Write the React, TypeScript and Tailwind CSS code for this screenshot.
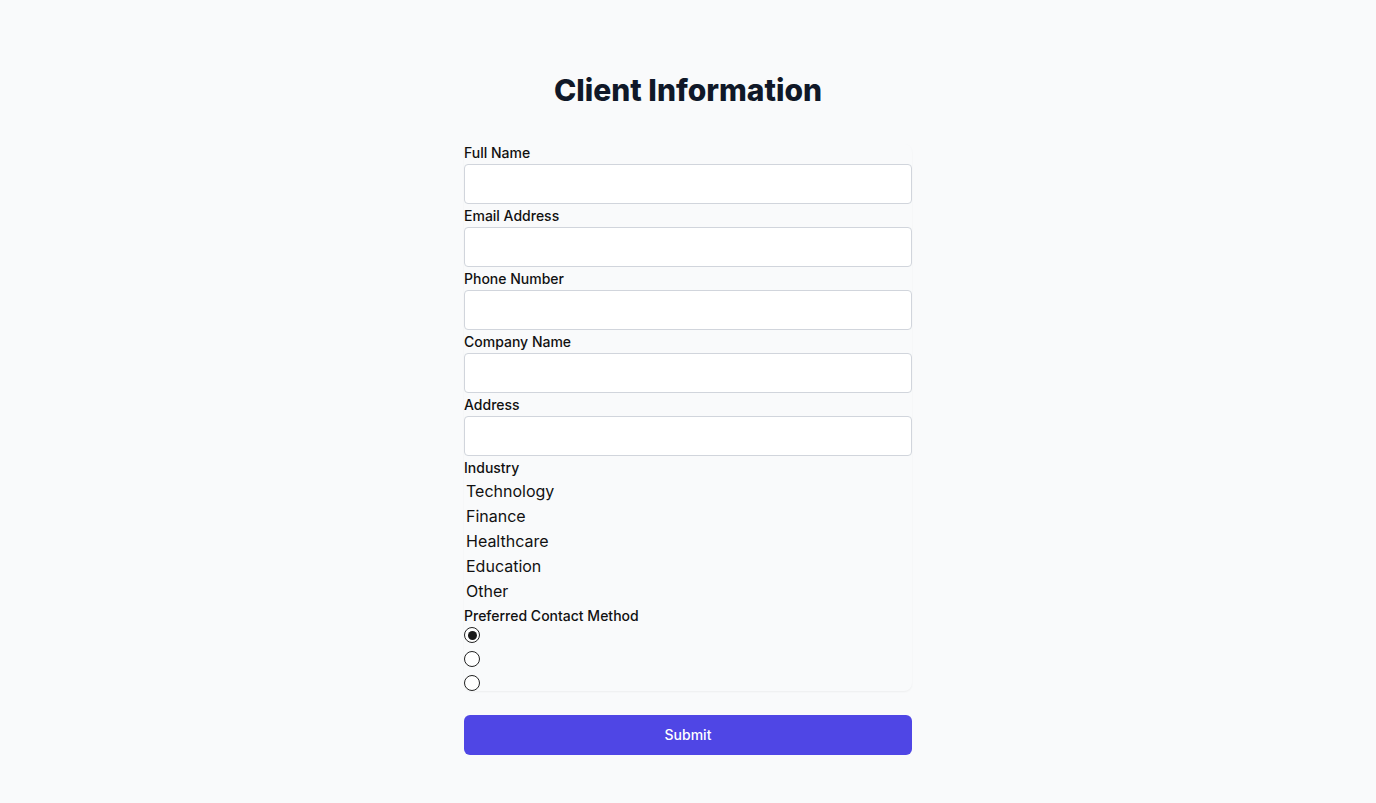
import React from "react";

const fields = ["Full Name", "Email Address", "Phone Number", "Company Name", "Address"];
const industries = ["Technology", "Finance", "Healthcare", "Education", "Other"];

export default function App() {
  return (
    <div className="min-h-[803px] bg-gray-50 pt-[72px] pb-12 font-['Inter',sans-serif]">
      <h1 className="text-center text-3xl font-extrabold leading-9 text-gray-900">Client Information</h1>
      <div className="mx-auto mt-9 w-[448px]">
        <div className="rounded-lg bg-gray-50 shadow-[0_1px_2px_0_rgba(0,0,0,0.05)]">
          {fields.map((f) => (
            <div key={f} className="mb-[3px]">
              <label className="block h-5 text-sm font-medium leading-[18px] text-[#111111]">{f}</label>
              <div className="h-10 w-full rounded border border-gray-300 bg-white" />
            </div>
          ))}
          <label className="block h-5 text-sm font-medium leading-[18px] text-[#111111]">Industry</label>
          <div className="-mt-px">
            {industries.map((i) => (
              <div key={i} className="flex h-[25px] items-center px-[2px] text-base text-[#111111]">
                {i}
              </div>
            ))}
          </div>
          <label className="block pt-[3px] text-sm font-medium leading-5 text-[#111111]">Preferred Contact Method</label>
          <div className="mt-px flex flex-col gap-2">
            {[0, 1, 2].map((n) => (
              <div key={n} className="flex h-4 w-4 items-center justify-center rounded-full border border-[#222222] bg-white">
                {n === 0 && <div className="h-[9px] w-[9px] rounded-full bg-[#1a1a1a]" />}
              </div>
            ))}
          </div>
        </div>
        <button className="mt-6 h-10 w-full rounded-md bg-[#4f46e5] text-sm font-medium text-white">Submit</button>
      </div>
    </div>
  );
}
